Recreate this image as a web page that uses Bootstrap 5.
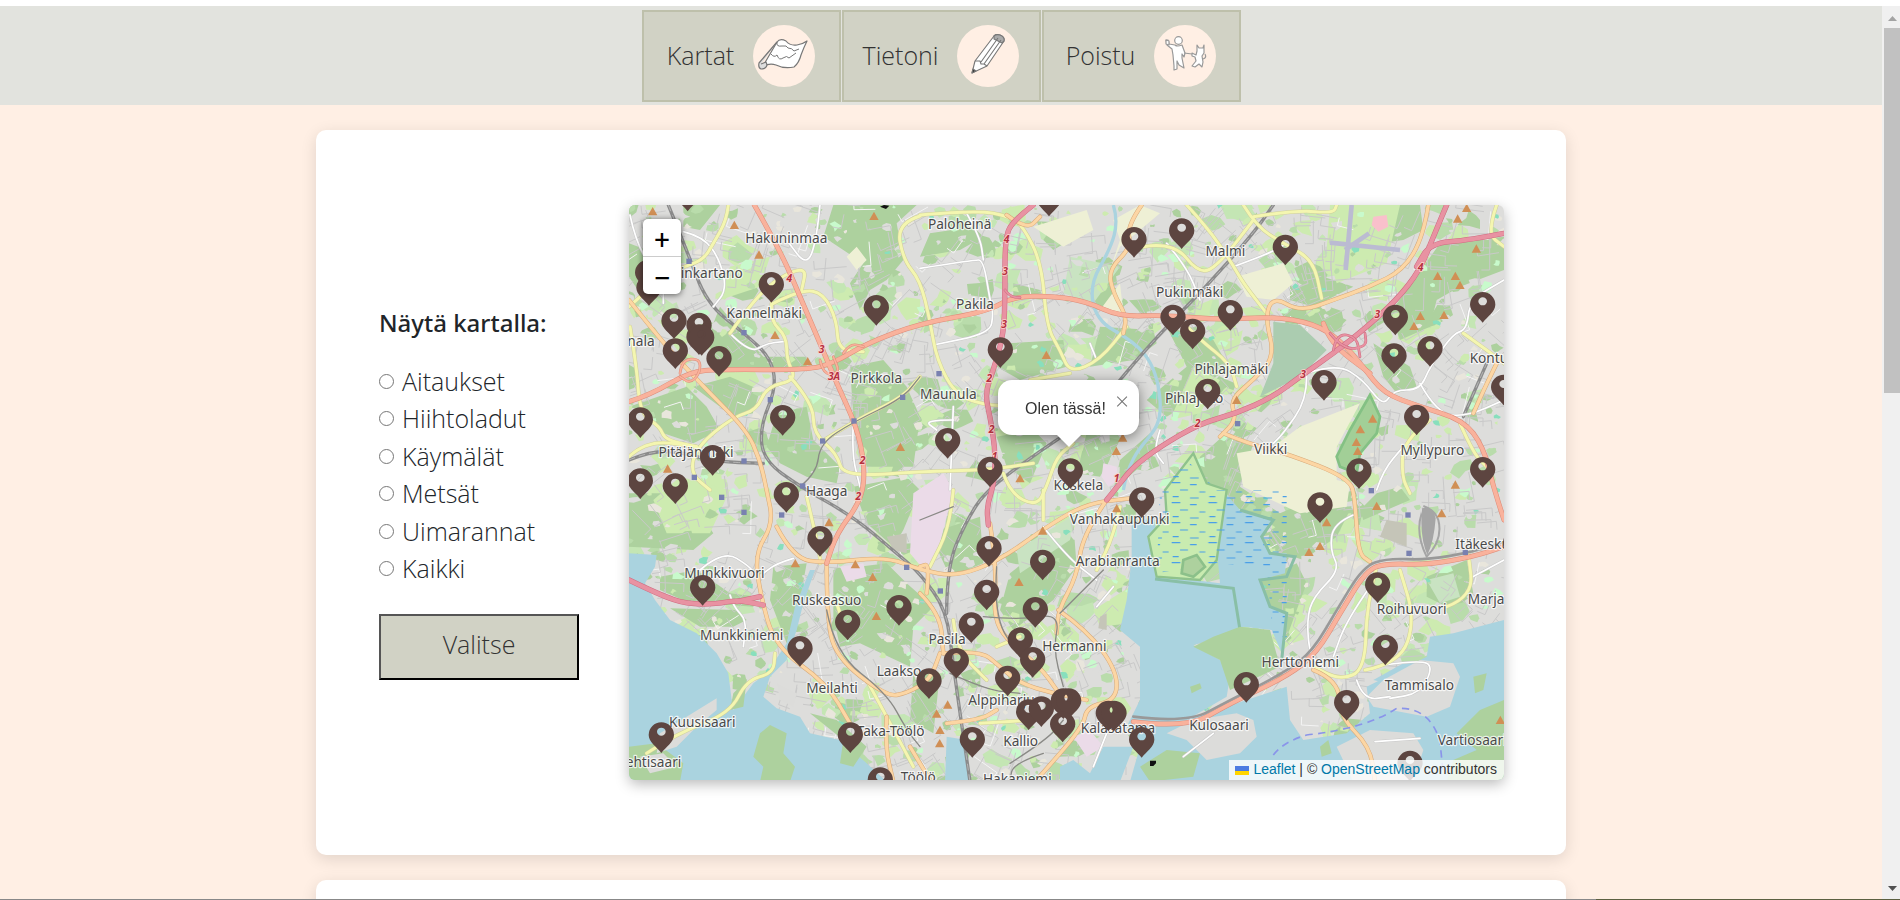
<!DOCTYPE html>
<html lang="fi">
<head>
<meta charset="utf-8">
<meta name="viewport" content="width=device-width, initial-scale=1">
<title>Kartat</title>
<link href="https://cdn.jsdelivr.net/npm/bootstrap@5.3.0/dist/css/bootstrap.min.css" rel="stylesheet">
<style>
  body { font-family: "Open Sans", sans-serif; font-size: 25px; font-weight: 300; color: #212529; background: #fff; }
  .viewport-row { padding-top: 6px; min-height: 0; }
  .page { background: #ffefe4; min-width: 0; }
  .topnav { background: #e2e3de; padding: 4px 0 3px; gap: 1px; }
  .topnav a { width: 199px; height: 92px; gap: 19px; background: #d1d2c5; border: 2px solid #bec0ab; color: #333; text-decoration: none; }
  .topnav svg { width: 62px; height: 62px; flex: none; }
  .panel { width: 100%; max-width: 1250px; background: #fff; border-radius: 10px; box-shadow: 0 4px 16px rgba(0,0,0,.12); margin: 25px auto 0; }
  .panel-inner { padding: 75px 62px 75px 63px; }
  .filters { width: 250px; flex: none; }
  .filters h2 { font-family: "Noto Sans", sans-serif; font-size: 24px; font-weight: 500; line-height: 34px; margin: 0 0 23px; }
  .filters .choice { line-height: 1.5; gap: 8px; }
  .filters input { width: 15px; height: 15px; margin: 0; }
  .choose { width: 200px; height: 66px; margin-top: 26px; padding: 0 0 4px; background: #d1d2c5; color: #333; border: 2px solid; border-color: #555 #000 #000 #555; font-weight: 300; }
  .mapbox { height: 575px; border-radius: 6px; box-shadow: 0 4px 14px rgba(0,0,0,.28); min-width: 0; font-family: "Liberation Sans", sans-serif; font-weight: 400; }
  .mapbox > svg { width: 100%; height: 100%; display: block; border-radius: 6px; }
  .zoomer { position: absolute; left: 14px; top: 14px; width: 38px; border-radius: 5px; background: #fff; box-shadow: 0 1px 6px rgba(0,0,0,.6); }
  .zoomer button { height: 37px; background: none; border: 0; padding: 0; font: 28px/40px "Noto Sans", sans-serif; font-weight: 500; color: #000; }
  .zoomer button + button { border-top: 1px solid #ccc; height: 38px; }
  .bubble { position: absolute; left: 369px; top: 175px; width: 141px; height: 55px; background: #fff; border-radius: 14px; color: #333; font-size: 16px; line-height: 57px; padding-left: 27px; filter: drop-shadow(0 3px 7px rgba(0,0,0,.45)); }
  .bubble::after { content: ""; position: absolute; left: 58px; top: 54px; border: 13px solid transparent; border-top-color: #fff; border-bottom: 0; }
  .bubble button { position: absolute; right: 9px; top: 8px; width: 16px; height: 26px; border: 0; padding: 0; background: none; color: #757575; font: 24px/26px "Open Sans", sans-serif; font-weight: 300; }
  .credit { position: absolute; right: 0; bottom: 0; height: 20px; padding: 0 7px 0 6px; background: rgba(255,255,255,.8); font-size: 14px; line-height: 19px; color: #333; white-space: nowrap; border-bottom-right-radius: 6px; }
  .credit a { color: #0078a8; text-decoration: none; }
  .credit svg { width: 14px; height: 9px; margin-right: 4px; }
  .lbl text { font: 41px "Noto Sans", sans-serif; fill: #4a4a4a; stroke: #fff; stroke-opacity: .75; stroke-width: 7px; paint-order: stroke; stroke-linejoin: round; text-anchor: middle; }
  .lbl .s { text-anchor: start; } .lbl .e { text-anchor: end; }
  .nums text { font: italic bold 31px "Noto Sans", sans-serif; fill: #b5303f; stroke: #fbd3cd; stroke-width: 5px; paint-order: stroke; text-anchor: middle; }
  .rd { fill: none; stroke-linejoin: round; stroke-linecap: round; }
  .scroller { width: 18px; flex: none; background: #f0f0f0; padding: 1px 0 0 2px; }
  .scroller .thumb { height: 365px; background: #c1c1c1; }
  .scroller svg { width: 16px; height: 21px; display: block; }
  .desk { height: 1px; flex: none; background: linear-gradient(90deg, #888 84%, #5b6040 84%); }
</style>
</head>
<body class="vh-100 d-flex flex-column overflow-hidden">
<div class="viewport-row d-flex flex-grow-1">
  <div class="page flex-grow-1 overflow-hidden">
    <nav class="topnav d-flex justify-content-center">
      <a href="#" class="d-flex align-items-center justify-content-center">Kartat
        <svg viewBox="0 0 62 62" aria-hidden="true"><circle cx="31" cy="31" r="31" fill="#ffefe4"/><g fill="#fff" stroke="#777" stroke-width="1.2" stroke-linejoin="round"><path d="M24 17q3-4 9-1 4 5 11 4 6-1 10-4-3 6-6 14-2 8-7 12-10 2-18-2-6-2-13 1z"/><path d="M24 17L6 38q-1 5 2 6 5 0 6-4l-1-3-5 2" fill="#ddd"/><path fill="none" stroke-width="1" d="M24 17q-1 5 5 4 5-1 6 2 4 0 6 3l5-2M18 29q3 4 6 1 2 6 6 3 4-3 6 0l7-5"/></g></svg></a>
      <a href="#" class="d-flex align-items-center justify-content-center">Tietoni
        <svg viewBox="0 0 62 62" aria-hidden="true"><circle cx="31" cy="31" r="31" fill="#ffefe4"/><g fill="#fff" stroke="#777" stroke-width="1.1" stroke-linejoin="round"><path d="M37 11q2-2 6-1 5 2 4 6L30 41 15 48l3-12z"/><path fill="#aaa" d="M37 11q2-2 6-1 5 2 4 6l-2 2-8-4z"/><path fill="none" d="M41 13L24 37M44 15L27 39l3 2M18 36l5 0 1 3 3 0 3 2"/><path fill="#222" d="M15 48l1-4 3 2z"/></g></svg></a>
      <a href="#" class="d-flex align-items-center justify-content-center">Poistu
        <svg viewBox="0 0 62 62" aria-hidden="true"><circle cx="31" cy="31" r="31" fill="#ffefe4"/><g fill="#fff" stroke="#999" stroke-width="1.2" stroke-linejoin="round"><path d="M21 20q2 2 7 0l3 8-1 4-2-3v4l2 10-5-3-2-4 0 8-3 1v-4l-1-11-1-6-5-4-1-5 2 0 1 4z"/><circle cx="24.500" cy="15.500" r="3.800"/><path d="M12 19l0-4 3 1v4z"/><path d="M43 26v-6l2 3h4l1-3v8l-2 3 1 6-1 5-3-3-4 3-3-1 4-5-1-4-3-1v-3l4 2z"/><path d="M30 28l8 1M49 34q4-1 2-5" fill="none"/></g></svg></a>
    </nav>
    <main>
      <section class="panel">
        <div class="panel-inner d-flex align-items-center">
          <form class="filters" onsubmit="return false">
            <h2>Näytä kartalla:</h2>
            <div class="choice d-flex align-items-center"><input type="radio" name="layer" id="c1"><label for="c1">Aitaukset</label></div>
            <div class="choice d-flex align-items-center"><input type="radio" name="layer" id="c2"><label for="c2">Hiihtoladut</label></div>
            <div class="choice d-flex align-items-center"><input type="radio" name="layer" id="c3"><label for="c3">Käymälät</label></div>
            <div class="choice d-flex align-items-center"><input type="radio" name="layer" id="c4"><label for="c4">Metsät</label></div>
            <div class="choice d-flex align-items-center"><input type="radio" name="layer" id="c5"><label for="c5">Uimarannat</label></div>
            <div class="choice d-flex align-items-center"><input type="radio" name="layer" id="c6"><label for="c6">Kaikki</label></div>
            <button class="choose d-block">Valitse</button>
          </form>
          <div class="mapbox position-relative flex-grow-1">
            <svg viewBox="27 15 2625 1725" preserveAspectRatio="xMidYMid slice">
              <defs>
                <path id="pin" fill="#5d4540" fill-rule="evenodd" d="M0 0C-13-18-38-33-38-54A38 38 0 0 1 38-54C38-33 13-18 0 0ZM-13-64a13 12 0 0 0 26 0a13 12 0 0 0-26 0Z"/>
                <path id="peak" fill="#d08f55" d="M-14 12L0-13L14 12Z"/>
                <pattern id="reeds" width="110" height="60" patternUnits="userSpaceOnUse"><path d="M5 8h26M60 14h20M30 30h24M88 36h18M8 50h18M60 54h26" stroke="#4a9fe8" stroke-width="3.500"/></pattern>
              </defs>
              <rect x="27" y="15" width="2625" height="1725" fill="#dddddb"/>
              <g id="parks"></g>
              <g fill="#add19e">
                <path d="M640 15H890L830 70 850 180 800 240 750 270 720 330 690 250 730 190 610 110Z"/>
                <path d="M690 500L790 480 860 560 900 650 880 800H740L700 650Z"/>
                <path d="M190 15L300 15 240 90 190 80ZM27 130L80 150 130 250 60 280 27 230Z"/>
                <path d="M300 320L430 470 560 470 560 510 300 508 260 420ZM220 560L330 530 420 570 400 640 340 650ZM27 620L200 560 260 620 300 690 220 730 130 700 90 640ZM470 640L560 620 580 720 660 800 650 850 560 830 480 790 440 740Z"/>
                <path d="M700 860L860 830 900 870 850 990 820 1040 740 970ZM640 1110L800 1090 860 1150 940 1220 880 1280 870 1400 720 1330 660 1340 640 1250Z"/>
                <path d="M27 880L200 880 280 1000 220 1050 27 1040ZM120 1130L230 1110 330 1180 410 1190 400 1220 200 1205 120 1170ZM150 1225L350 1230 380 1260 340 1280 240 1280ZM460 1100L560 1090 540 1200 500 1330 450 1200Z"/>
                <path d="M930 100L1060 80 1090 110 1020 150 900 170ZM1160 430L1330 420 1340 500 1200 540 1130 500ZM1180 250L1260 270 1270 300 1180 290ZM1290 90L1350 120 1300 150 1270 120Z"/>
                <path d="M1390 240L1480 180 1500 300 1430 330ZM1440 380L1600 390 1610 430 1540 480 1410 500ZM1500 780L1590 700 1620 740 1560 800 1480 870ZM1400 700L1500 720 1440 830 1370 820ZM1130 710L1240 690 1280 730 1230 850 1160 800Z"/>
                <path d="M1640 380L1780 420 1820 490 1740 590 1640 650 1580 600 1700 500ZM1980 330L2100 320 2180 360 2150 390 2000 370ZM2460 130L2652 110V210L2520 260 2450 300 2430 380 2340 420 2310 340Z"/>
                <path d="M2240 80L2320 15 2400 15 2410 90 2350 120 2280 130ZM2010 240L2110 230 2200 260 2080 320 2010 300ZM2260 430L2370 500 2390 560 2330 580 2290 530Z"/>
                <path d="M1740 770L1840 680 1900 730 1860 860 1980 940 2120 880 2200 910 2150 1010 2050 1080 1960 1050 1920 1000 1700 920Z"/>
                <path d="M1920 1140L2030 1090 2060 1150 2030 1230 1990 1340 1950 1220ZM2420 1130L2540 1080 2560 1180 2480 1220 2420 1190ZM2270 880L2340 860 2370 900 2230 960 2220 930Z"/>
                <path d="M1170 1120L1360 970 1370 1100 1300 1200 1180 1290 1140 1230ZM930 1000L1080 950 1090 1090 990 1130ZM880 1420L960 1420 940 1600 870 1560Z"/>
              </g>
              <g fill="#c9e3c2"><path d="M1190 1050L1370 940 1350 1020 1200 1120ZM1350 170L1500 200 1420 310 1330 280ZM2420 1140L2500 1120 2520 1190 2460 1210Z"/></g>
              <path fill="#cdebb0" d="M2130 15H2340L2300 190 2150 250 2120 150ZM180 830L330 870 270 1000 140 1000 100 900ZM1420 1230L1530 1160 1530 1270 1440 1280ZM330 200L450 170 420 260 300 300ZM1720 500L1800 540 1740 640 1650 660Z"/>
              <g id="streets"></g>
              <g fill="#eef0d5">
                <path d="M1240 80L1400 30 1420 90 1330 140ZM1480 60L1560 15 1620 40 1500 140 1470 210 1500 120ZM1850 230L1990 190 2020 250 1960 300 1880 290ZM1500 250L1510 340 1440 330ZM2040 680L2220 610 2150 740 2150 840 2190 850 2180 920 2040 940 1870 860 1850 760 1960 740ZM680 170L710 140 740 180 710 210Z"/>
              </g>
              <path fill="#abccb0" d="M1960 365L2040 375 2120 450 2040 530 1920 590 1960 490Z"/>
              <path fill="#a2cf97" stroke="#84c184" stroke-width="8" d="M2250 585L2280 650 2270 700 2220 760 2210 820 2160 800 2150 770 2190 690Z"/>
              <path fill="#ebdbe8" d="M880 880L970 820 1000 870 960 1030 920 1120 870 1060ZM1450 790l40 10 5 40-30 20-20-30ZM660 1100l70-10 10 40-60 15ZM1360 1610l50 -20 40 50-50 30Z"/>
              <path fill="#c5c5b8" d="M2300 960L2360 970 2360 1040 2280 1010ZM1440 1250l20-10v50l-25-5ZM800 1010l60-10v60l-40-10Z"/>
              <path fill="#f9c0cb" d="M2260 50l40-5 5 35-30 15-20-20Z"/>
              <g fill="#aad3df">
                <path d="M27 1060L110 1065 105 1100 75 1150 105 1200 150 1260 230 1300 290 1360 325 1420 335 1500 340 1530 400 1450 440 1420 500 1330 525 1220 570 1110 585 1110 550 1210 530 1290 500 1380 450 1430 430 1490 470 1525 540 1550 570 1600 660 1620 740 1690 800 1745H27Z"/>
                <path d="M1535 970L1600 950 1640 1130 1800 1150 1780 930 1800 860 1860 930 1960 960 1925 1010 1950 1060 2000 1060 1995 1120 1920 1140 1950 1220 2000 1240 1990 1370 1955 1290 1870 1280 1810 1310 1720 1335 1800 1380 1830 1430 1820 1490 1700 1560 2000 1460 2010 1560 2050 1620 2180 1600 2250 1540 2240 1460 2420 1370 2430 1310 2500 1300 2652 1260V1745H1530L1560 1640 1520 1580 1560 1500V1340L1500 1290 1520 1200 1535 1080Z"/>
                <path d="M980 1610L1040 1620 1045 1745H975ZM1320 1700L1360 1680 1410 1720 1450 1640 1540 1640 1500 1745H1320ZM2260 1440L2350 1390 2440 1385 2420 1420 2300 1450Z"/>
              </g>
              <path d="M1480 15C1500 80 1480 130 1440 200S1410 350 1480 390 1610 470 1620 600 1540 700 1510 870" fill="none" stroke="#aad3df" stroke-width="10"/>
              <path fill="#c9ebb0" stroke="#8fc28c" stroke-width="7" d="M1720 760L1760 850 1820 870 1790 1080 1740 1140 1610 1130 1585 1010 1640 950 1635 870Z"/>
              <path fill="url(#reeds)" d="M1700 780L1790 870H2000V1320H1960L1940 1100 1790 1090 1610 1120 1620 880Z"/>
              <path fill="none" stroke="#89bfa6" stroke-width="9" d="M1605 1137L1840 1165 1860 1290M1860 930L1960 960 1925 1010 1950 1060 2025 1070 2000 1130 1920 1140 1950 1220 2000 1240 1985 1380"/>
              <path fill="#add19e" stroke="#8cc08a" stroke-width="8" d="M1690 1080L1730 1065 1755 1100 1720 1130 1685 1120Z"/>
              <g fill="#add19e">
                <path d="M450 1575L500 1600 490 1660 525 1700 510 1745H420L430 1700 400 1670 420 1600ZM1720 1340L1780 1310 1860 1280 1950 1290 1980 1400 1830 1470 1800 1380ZM2510 1600L2580 1530 2652 1500V1745H2480L2500 1680 2570 1650ZM1710 1460l30-10 5 15-30 15ZM2560 1430l40-10-10 50-25 10ZM2100 1640l25-20 10 40-30 10Z"/>
                <path d="M27 1640L110 1630 190 1690 180 1745H27ZM340 1480L380 1440 370 1520 330 1530ZM1560 1700L1640 1650 1740 1660 1720 1730 1590 1745ZM570 1540L650 1560 740 1640 700 1700 660 1690 670 1620Z"/>
              </g>
              <g fill="#dcdcda">
                <path d="M120 1600L200 1550 290 1495 290 1530 230 1580 170 1640 110 1660ZM1640 1600L1720 1560 1850 1540 1900 1560 1910 1610 1860 1660 1760 1680 1700 1620ZM2240 1490L2290 1440 2400 1380 2500 1390 2520 1430 2490 1520 2420 1550 2260 1520ZM2150 1640L2250 1590 2380 1600 2410 1650 2380 1745H2200ZM60 1670l70-10 40 40-80 20ZM470 1450l60 30-10 40-40-20Z"/>
              </g>
              <g id="rails" class="rd"></g>
              <g id="roads" class="rd"></g>
              <path d="M2195 15l-18 195M2130 128l210 22M2175 150l72-50" stroke="#bbbbd2" stroke-width="14" fill="none"/>
              <path d="M1960 1665q30-40 100-60 180-20 270-80 100-5 130 100l10 100" fill="none" stroke="#8a94ea" stroke-width="5" stroke-dasharray="22 16"/>
              <path d="M2405 940q-20 60 15 130 50-50 35-110-10-30-45-42" fill="none" stroke="#a5a5a5" stroke-width="6"/>
              <path d="M2405 925q35-10 42 30-5 70-25 110-25-60-15-145" fill="#a5a5a5"/>
              <g id="marks"></g>
              <g class="nums"><text x="508" y="247">4</text><text x="605" y="460">3</text><text x="642" y="539">3A</text><text x="728" y="793">2</text><text x="715" y="901">2</text><text x="1160" y="128">4</text><text x="1155" y="226">3</text><text x="1152" y="383">3</text><text x="1108" y="547">2</text><text x="1115" y="698">2</text><text x="1124" y="780">1</text><text x="1733" y="680">2</text><text x="1490" y="845">1</text><text x="2402" y="212">4</text><text x="2272" y="354">3</text><text x="2049" y="534">3</text></g>
              <g class="lbl">
                <text x="499" y="128">Hakuninmaa</text><text class="e" x="368" y="235">inkartano</text><text x="433" y="353">Kannelmäki</text><text class="e" x="104" y="438">nala</text><text x="769" y="550">Pirkkola</text><text x="228" y="771">Pitäjänmäki</text><text x="620" y="888">Haaga</text>
                <text x="1019" y="87">Paloheinä</text><text x="1065" y="327">Pakila</text><text x="985" y="597">Maunula</text><text x="1709" y="290">Pukinmäki</text><text x="1816" y="167">Malmi</text><text x="1834" y="521">Pihlajamäki</text><text class="s" x="1635" y="608">Pihlajisto</text><text x="1375" y="871">Koskela</text><text x="1952" y="761">Viikki</text><text x="2437" y="766">Myllypuro</text><text class="s" x="2549" y="489">Kontula</text>
                <text x="313" y="1134">Munkkivuori</text><text x="620" y="1214">Ruskeasuo</text><text x="365" y="1321">Munkkiniemi</text><text class="s" x="770" y="1427">Laakso</text><text x="636" y="1479">Meilahti</text><text x="247" y="1580">Kuusisaari</text><text class="e" x="184" y="1701">ehtisaari</text><text x="812" y="1609">Taka-Töölö</text><text x="895" y="1747">Töölö</text>
                <text x="1499" y="972">Vanhakaupunki</text><text x="1493" y="1098">Arabianranta</text><text x="981" y="1332">Pasila</text><text x="1363" y="1354">Hermanni</text><text class="s" x="1045" y="1515">Alppiharju</text><text x="1202" y="1637">Kallio</text><text x="1494" y="1599">Kalasatama</text><text x="1192" y="1751">Hakaniemi</text><text x="1797" y="1590">Kulosaari</text>
                <text x="2375" y="1241">Roihuvuori</text><text class="s" x="2506" y="1048">Itäkeskus</text><text class="s" x="2543" y="1211">Marjaniemi</text><text x="2041" y="1402">Herttoniemi</text><text x="2398" y="1471">Tammisalo</text><text class="s" x="2453" y="1634">Vartiosaari</text>
              </g>
              <g id="pins"></g>
            </svg>
            <div class="zoomer d-flex flex-column"><button type="button" aria-label="Lähennä">+</button><button type="button" aria-label="Loitonna">−</button></div>
            <div class="bubble">Olen tässä!<button type="button" aria-label="Sulje">×</button></div>
            <div class="credit"><svg viewBox="0 0 14 9"><path fill="#4c7be1" d="M0 0h14v5H0z"/><path fill="#ffd500" d="M0 5h14v4H0z"/></svg><a href="#">Leaflet</a> | © <a href="#">OpenStreetMap</a> contributors</div>
          </div>
        </div>
      </section>
      <section class="panel"><div class="panel-inner"></div></section>
    </main>
  </div>
  <div class="scroller d-flex flex-column" aria-hidden="true">
    <svg viewBox="0 0 16 21"><path fill="#a3a3a3" d="M4 14h9L8.500 9z"/></svg>
    <div class="thumb"></div>
    <svg class="mt-auto" viewBox="0 0 16 21"><path fill="#505050" d="M4 8h9l-4.500 5z"/></svg>
  </div>
</div>
<div class="desk"></div>
<script src="https://cdn.jsdelivr.net/npm/bootstrap@5.3.0/dist/js/bootstrap.bundle.min.js"></script>
<script>
  const put = (id, html) => { document.getElementById(id).innerHTML = html; };

  // Smooth a list of points into a path with rounded bends
  function curve(s) {
    const n = s.split(' ').map(p => p.split(',').map(Number));
    let d = 'M' + n[0];
    for (let i = 1; i < n.length - 1; i++) d += 'Q' + n[i] + ' ' + (n[i][0] + n[i + 1][0]) / 2 + ',' + (n[i][1] + n[i + 1][1]) / 2;
    return d + 'L' + n[n.length - 1];
  }

  // Neighbourhood streets, yards and small parks
  let seed = 7;
  const rnd = () => (seed = (seed * 16807) % 2147483647) / 2147483647;
  function blobs(count, min, span, tints) {
    let t = '';
    for (let i = 0; i < count; i++) {
      const x = rnd() * 2625 + 27, y = rnd() * 1725 + 15, r = min + rnd() * span;
      let p = '';
      for (let a = 0; a < 7; a++) { const q = r * (.5 + rnd()); p += Math.round(x + q * Math.cos(a * .9)) + ',' + Math.round(y + q * .8 * Math.sin(a * .9)) + ' '; }
      t += `<polygon points="${p}" fill="${tints[i % tints.length]}"/>`;
    }
    return t;
  }
  put('parks', blobs(620, 10, 34, ['#add19e', '#cdebb0', '#b9dcab', '#cdebb0', '#c4e6b4']));
  let t = blobs(1500, 5, 13, ['#cdebb0', '#dddddb', '#c8facc', '#add19e', '#dddddb', '#e9e6dc', '#b9dcab']) + blobs(90, 7, 7, ['#88dfbd']);
  for (let i = 0; i < 1500; i++) {
    const x = rnd() * 2625 + 27, y = rnd() * 1725 + 15, a = Math.sin(x / 300) + Math.cos(y / 260) + (rnd() > .5 ? 1.57 : 0), l = 30 + rnd() * 70;
    t += `<path d="M${Math.round(x)} ${Math.round(y)}l${Math.round(l * Math.cos(a))} ${Math.round(l * Math.sin(a))}l${Math.round(-25 * Math.sin(a))} ${Math.round(25 * Math.cos(a))}" fill="none" stroke="${i % 14 ? '#c9c9c9' : '#f4f4f4'}" stroke-width="3"/>`;
  }
  put('streets', t);

  const roads = [
    ['#fff', '#c8c8c8', 5, ['600,15 590,120 560,200 500,120', '190,95 250,110 300,180 320,270 280,320', '900,205 1060,180 1090,180 1110,300 1120,340 1110,400 940,435', '1040,40 1080,110 1090,180', '330,400 390,460 440,430 490,425', '700,670 695,760 720,860', '30,45 50,140 130,250 130,310', '240,1110 310,1050 390,1100 400,1120', '330,1185 340,1220 380,1260 370,1340', '520,1075 470,1090 430,1120', '1640,130 1700,200 1740,300', '1840,200 1950,160 2000,130', '2060,530 2060,600 1990,700 1960,730', '2060,520 2150,490 2230,540 2290,620 2320,570 2400,570 2430,500 2500,400 2540,390 2550,300 2652,240', '2400,550 2450,640 2540,650 2652,600', '2200,945 2140,970 2130,1050 2160,1110 2080,1190 2060,1260 2070,1370 2110,1400', '2250,1160 2180,1260 2140,1370', '2210,1440 2230,1500 2310,1490', '2290,1395 2400,1380 2440,1400 2400,1480 2310,1495', '2265,1625 2400,1615', '1270,980 1340,1070 1430,1140', '1460,1600 1420,1700', '1620,690 1600,750 1630,790', '1690,1670 1780,1600', '1000,660 910,660 950,690', '1000,620 990,870', '1410,430 1430,480', '1480,1160 1430,1220', '2270,870 2290,810 2350,740', '2550,1135 2652,1080']],
    ['#f4f6b0', '#cfcf9c', 9, ['325,15 320,60 280,130 250,180 180,205', '27,320 60,290 120,240', '330,400 400,300 480,230 560,200 545,270', '460,310 545,268 610,280 650,360 655,450 730,455', '455,310 450,360 500,410 500,480 530,540 440,560 410,630 340,650 230,740 210,820 270,870', '30,380 50,500 60,640 120,680 135,720 230,740', '27,770 80,720 230,740', '510,530 580,610 580,700 650,760 670,830 900,815 1100,810 1240,790', '608,723 702,663 848,592 900,530', '900,48 830,70 850,180 900,240 930,360 950,480 1010,590 1120,620 1180,610', '900,45 1070,30 1170,50 1210,80 1265,190 1280,380 1320,450 1350,520 1440,480 1520,380', '1350,520 1230,540', '1570,140 1660,125 1740,225 1800,190 1900,60', '1700,15 1760,80 1830,180 1870,250 1940,340', '1870,15 1910,80 1990,130 2080,180 2105,295', '1900,50 2030,30 2140,40 2150,15', '1670,350 1740,420 1830,490 1850,560', '1150,820 1170,880 1250,920 1280,860 1310,770 1360,730', '1000,870 990,980 930,1100', '1270,870 1270,960', '2630,15 2600,100 2652,140', '2530,400 2600,450 2652,490', '2430,660 2350,720 2345,830 2370,880', '2520,670 2560,760 2600,800', '2270,1100 2240,1210 2235,1410 2160,1440 2080,1400', '2235,1410 2340,1390 2385,1260 2340,1110', '2480,1220 2560,1190 2545,1060', '80,1660 170,1600 330,1540 380,1440 460,1420 465,1360', '740,1440 800,1550 880,1700', '560,890 600,1060 600,1090', '1500,920 1480,1010 1430,1110', '1080,1570 1240,1560', '650,1210 660,1240', '1000,1260 1010,1350 1100,1440', '1130,1340 1200,1310']],
    ['#fcd6a4', '#d6a878', 10, ['27,300 130,430 250,560 380,690 420,780 440,870 460,970 405,1060 420,1180 465,1340 620,1450 690,1570', '470,980 520,1075 620,1090 800,1070 900,1110 1010,1130 1140,1080 1280,980 1400,910 1530,895', '1565,15 1520,80 1535,140 1465,210 1480,280 1520,350 1510,400', '2425,15 2410,110 2350,210 2250,260 2140,300 2040,335 1960,290 1935,350 1965,470 1900,540 1830,600 1850,660 1800,710', '1810,700 1880,730 2000,760 2190,835 2205,900 2215,1060 2250,1085', '1110,970 1130,1100 1120,1250 1160,1320 1260,1400 1310,1470', '1460,900 1390,1000 1370,1130 1315,1230 1310,1300', '1315,1230 1400,1290 1490,1410 1490,1500 1400,1520 1390,1580 1250,1740', '970,1360 1080,1350 1140,1400 1200,1450 1300,1480 1400,1500', '620,1090 620,1240 645,1370 800,1490 860,1480 930,1440 960,1360', '800,1550 795,1640 820,1745', '2080,1410 2155,1440 2160,1550 2250,1640 2265,1745', '980,1570 1080,1560 1130,1530', '870,1640 900,1690 930,1740', '2640,470 2600,550 2560,640', '920,1180 930,1090 900,1100', '1160,45 1220,90 1260,50', '900,1180 960,1240 970,1360']],
    ['#f9b29c', '#dd8b78', 12, ['27,605 90,585 210,515 300,508 560,510 640,490 740,430 900,370 1100,335 1180,290 1300,288 1400,305 1500,350 1640,345 1800,360 1960,350 2080,370 2160,420 2230,500 2290,580 2400,620 2530,660 2590,740 2620,860 2652,960', '403,15 480,150 540,290 600,430 650,550 710,680 735,800 725,900 650,1000 620,1090', '1540,1565 1700,1585 1830,1510 2000,1430 2090,1360 2160,1240 2240,1110 2300,1090 2420,1095 2560,1070 2652,1040', '2110,370 2130,430 2250,520']],
    ['#f9b29c', '#dd8b78', 5, ['180,520 185,480 240,475 240,520 210,550 180,530', '600,480 610,525 660,520 640,470', '670,460 690,430 730,440']],
    ['#e892a2', '#cf6a80', 13, ['27,1140 120,1185 200,1212 290,1212 350,1200 430,1215', '350,1205 420,1190', '1240,15 1175,65 1155,120 1155,270 1152,400 1120,510 1095,580 1110,650 1125,740 1125,840 1100,920 1105,975', '2480,15 2440,110 2400,210 2330,300 2230,390 2140,460 2040,530 1960,590 1850,640 1740,670 1620,740 1540,800 1500,850 1460,900', '2652,100 2550,120 2430,130 2390,200']],
    ['#e892a2', '#cf6a80', 5, ['1155,270 1170,290 1200,293', '2130,400 2170,450 2240,440 2235,400', '2140,450 2150,400 2210,410 2220,470']]
  ];
  put('roads', roads.map(([c, e, w, l]) => l.map(s => `<path d="${curve(s)}" stroke="${e}" stroke-width="${w + 3}"/>`).join('') + l.map(s => `<path d="${curve(s)}" stroke="${c}" stroke-width="${w}"/>`).join('')).join('')
    + ['1540,1550 1700,1570 1830,1500 2000,1415 2080,1350 2150,1230 2230,1100 2300,1075 2420,1080 2560,1055 2652,1025'].map(s => `<path d="${curve(s)}" stroke="#999" stroke-width="8"/>`).join('')
    + ['620,1230 645,1360 800,1480 860,1590 900,1640', '1130,1100 1120,1250 1200,1370', '990,1420 1100,1470 1200,1480', '1090,1250 1200,1260 1320,1240 1300,1350 1330,1460', '1320,1240 1450,1110', '1170,1690 1280,1620 1330,1560', '900,960 1000,920', '1270,1660 1180,1690 1170,1740', '540,860 590,820 600,730 702,665 848,595 900,530'].map(s => `<path d="${curve(s)}" stroke="#8a8a86" stroke-width="4"/>`).join(''));
  put('rails', ['145,15 200,150 260,310 370,398 450,470 470,560 420,680 430,780 540,860 700,950 830,1060 900,1120 980,1230 1000,1400 1050,1745', '27,780 120,740 280,785 430,790', '980,1240 980,1100 1040,960 1100,870 1250,760 1400,660 1600,420 1750,270 1900,100 1960,15', '2530,650 2600,490'].map(s => `<path d="${curve(s)}" stroke="#8b8b8b" stroke-width="10"/><path d="${curve(s)}" stroke="#b5b5b5" stroke-width="3" stroke-dasharray="18 14"/>`).join(''));

  const peaks = '98,34 343,75 417,164 762,48 465,405 563,484 841,741 143,806 627,967 526,1090 706,1093 758,1131 769,1248 1279,465 1508,713 1489,753 1200,835 1490,925 1268,992 1197,1146 983,1514 950,1541 960,1590 959,1630 2540,24 2513,56 2569,146 2453,228 2506,228 2520,255 2401,348 2382,378 2472,345 2258,656 2221,688 2209,726 2213,753 2120,967 2270,918 2465,940 2100,1038 2067,1056 2641,1560 1850,600 2506,854';
  const stations = '207,184 372,398 451,599 608,723 702,663 848,592 372,783 223,832 548,858 957,521 305,892 372,937 485,945 860,1102 961,1173 1853,671 2364,945 2367,1060 2536,1057 2254,872';
  put('marks', peaks.split(' ').map(p => `<use href="#peak" transform="translate(${p})"/>`).join('')
    + stations.split(' ').map(p => `<path d="M-8-8h16v16h-16z" fill="#7981b0" transform="translate(${p})"/>`).join('')
    + '<path d="M780 20l12-5 16 2-10 10zM1590 1682h18v8l-8 8h-10z" fill="#111"/>');

  const pins = '203,34 83,272 87,317 454,308 769,377 162,417 166,507 237,430 237,465 245,467 297,530 61,714 488,707 278,827 61,897 166,912 499,938 600,1070 248,1217 683,1321 837,1277 540,1400 124,1659 691,1659 781,1794 1287,49 1542,173 1685,147 1659,406 1718,448 1141,504 1763,628 983,776 1110,862 1351,867 1996,196 1831,392 2326,406 2322,522 2430,500 2588,368 2112,602 2390,706 2651,616 2217,867 2588,863 1565,954 1107,1100 1268,1141 1100,1231 1246,1283 1054,1329 1201,1374 1238,1433 1009,1436 927,1497 1163,1489 1226,1590 1264,1581 1330,1557 1346,1557 1328,1627 1465,1594 1482,1594 1057,1673 1565,1673 2100,969 2273,1209 2296,1396 1879,1508 2180,1562 2370,1744 2687,1082';
  put('pins', pins.split(' ').map(p => `<use href="#pin" transform="translate(${p})"/>`).join(''));
</script>
</body>
</html>
